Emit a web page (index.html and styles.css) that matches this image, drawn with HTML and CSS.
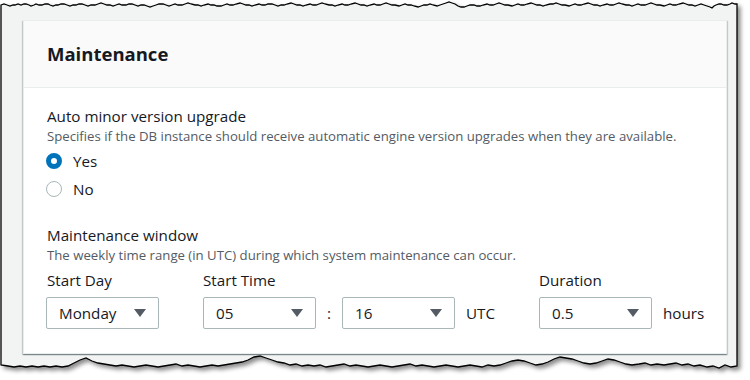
FILE: index.html
```html
<!DOCTYPE html>
<html lang="en">
<head>
  <meta charset="UTF-8">
  <title>Maintenance</title>
  <link rel="stylesheet" href="styles.css">
</head>
<body>
  <div class="sheet">
    <svg class="torn" width="750" height="380" viewBox="0 0 750 380">
      <path d="M1 5 L4 4 L7 5 L10 6 L13 5 L15 5 L18 4 L21 5 L24 4 L26 4 L29 5 L31 6 L34 5 L36 4 L39 5 L42 5 L45 4 L48 4 L50 5 L53 6 L56 5 L58 5 L61 4 L64 4 L67 5 L70 6 L73 5 L76 5 L79 4 L82 4 L85 5 L88 6 L91 5 L95 5 L98 4 L101 3 L104 4 L107 5 L110 5 L113 6 L116 5 L119 4 L122 5 L126 5 L129 4 L132 4 L135 5 L138 6 L141 5 L144 5 L147 6 L150 7 L153 6 L156 5 L159 4 L163 4 L166 5 L169 6 L172 5 L175 4 L178 5 L182 5 L185 4 L188 3 L191 4 L195 5 L198 5 L201 6 L204 5 L208 4 L211 5 L214 5 L217 6 L221 6 L224 5 L227 4 L230 5 L233 5 L236 4 L240 3 L243 4 L246 5 L249 5 L252 6 L255 5 L259 4 L262 5 L265 5 L268 4 L272 4 L275 5 L278 6 L281 5 L284 5 L287 4 L291 3 L294 4 L297 5 L300 5 L303 6 L306 5 L310 4 L313 5 L316 5 L319 4 L322 3 L325 4 L329 5 L332 5 L335 6 L338 5 L342 4 L345 5 L348 5 L351 4 L355 3 L358 4 L361 5 L364 5 L367 6 L370 5 L374 4 L377 5 L380 5 L383 4 L386 3 L389 4 L392 5 L395 5 L399 6 L402 5 L405 4 L408 5 L411 5 L414 6 L418 7 L421 6 L424 5 L427 5 L430 4 L433 5 L437 6 L440 5 L443 4 L446 3 L449 2 L452 3 L455 4 L458 6 L461 7 L464 7 L467 6 L470 5 L474 5 L477 6 L480 6 L483 5 L487 4 L490 5 L493 5 L496 4 L499 3 L502 4 L505 5 L508 5 L512 6 L515 5 L518 4 L521 5 L524 5 L527 4 L531 3 L534 4 L537 5 L540 5 L543 6 L546 5 L550 4 L553 4 L556 3 L559 4 L562 5 L565 5 L569 6 L572 5 L575 4 L578 5 L581 5 L584 4 L588 3 L591 4 L594 5 L597 5 L600 6 L603 5 L607 4 L610 5 L613 5 L616 4 L619 3 L622 4 L626 5 L629 5 L632 6 L635 5 L638 4 L641 5 L645 5 L648 4 L651 3 L654 4 L657 5 L660 5 L664 6 L667 5 L670 4 L673 5 L676 5 L679 4 L683 3 L686 4 L689 5 L692 5 L695 6 L698 5 L701 4 L704 5 L707 6 L710 7 L712 8 L714 6 L716 5 L719 4 L721 4 L724 5 L727 5 L730 4 L732 3 L735 4 L737 4 L737 366 L731 367 L725 365 L719 368 L713 366 L707 367 L700 365 L694 366 L688 364 L682 365 L676 363 L670 364 L664 365 L657 364 L651 365 L645 363 L639 364 L632 365 L626 364 L620 362 L614 360 L608 359 L602 361 L596 363 L590 364 L584 363 L578 361 L572 359 L566 358 L560 357 L554 359 L548 362 L542 364 L536 365 L530 363 L524 361 L518 360 L512 361 L506 363 L500 365 L494 366 L488 365 L482 367 L476 366 L470 365 L464 366 L458 367 L452 366 L446 365 L440 366 L434 367 L428 366 L422 365 L416 366 L410 364 L404 365 L398 366 L392 367 L386 366 L380 365 L374 366 L368 367 L362 366 L356 365 L350 366 L344 364 L338 365 L332 366 L326 367 L320 365 L314 366 L308 365 L302 366 L296 364 L290 365 L284 363 L278 362 L272 360 L266 358 L260 356 L254 357 L248 360 L242 362 L236 363 L230 364 L224 365 L218 366 L212 365 L206 366 L200 367 L194 366 L188 365 L182 366 L176 364 L170 365 L164 366 L158 367 L152 366 L146 365 L140 366 L134 367 L128 366 L122 365 L116 366 L110 365 L104 364 L98 363 L92 361 L86 358 L80 360 L74 363 L68 366 L62 367 L56 366 L50 367 L44 366 L38 367 L32 366 L26 367 L20 366 L14 367 L8 366 L1 365 Z"/>
    </svg>

    <div class="card">
      <div class="card-header">
        <h2>Maintenance</h2>
      </div>

      <div class="card-body">
        <div class="field">
          <div class="label">Auto minor version upgrade</div>
          <div class="desc">Specifies if the DB instance should receive automatic engine version upgrades when they are available.</div>
          <div class="radio"><span class="dot checked"></span>Yes</div>
          <div class="radio"><span class="dot"></span>No</div>
        </div>

        <div class="field window">
          <div class="label">Maintenance window</div>
          <div class="desc">The weekly time range (in UTC) during which system maintenance can occur.</div>

          <div class="window-row">
            <div class="group first">
              <div class="label">Start Day</div>
              <div class="select-row">
                <div class="select">Monday
                  <svg class="caret" width="12" height="8" viewBox="0 0 12 8"><path d="M0 0h12L6 8z"/></svg>
                </div>
              </div>
            </div>

            <div class="group">
              <div class="label">Start Time</div>
              <div class="select-row">
                <div class="select">05
                  <svg class="caret" width="12" height="8" viewBox="0 0 12 8"><path d="M0 0h12L6 8z"/></svg>
                </div>
                <span class="unit">:</span>
                <div class="select">16
                  <svg class="caret" width="12" height="8" viewBox="0 0 12 8"><path d="M0 0h12L6 8z"/></svg>
                </div>
                <span class="unit">UTC</span>
              </div>
            </div>

            <div class="group">
              <div class="label">Duration</div>
              <div class="select-row">
                <div class="select">0.5
                  <svg class="caret" width="12" height="8" viewBox="0 0 12 8"><path d="M0 0h12L6 8z"/></svg>
                </div>
                <span class="unit">hours</span>
              </div>
            </div>
          </div>
        </div>
      </div>
    </div>
  </div>
</body>
</html>
```

FILE: styles.css
```css
body {
  margin: 0;
  background: #ffffff;
  font-family: "Open Sans", Arial, sans-serif;
  color: #16191f;
}

.sheet {
  position: relative;
  width: 750px;
  height: 380px;
  padding: 20px 0 0 23px;
  box-sizing: border-box;
}

.torn {
  position: absolute;
  top: 0;
  left: 0;
  filter: drop-shadow(3px 3px 2px rgba(0, 0, 0, 0.45));
}

.torn path {
  fill: #f2f3f3;
  stroke: #000000;
  stroke-width: 1.3;
}

.card {
  position: relative;
  width: 704px;
  background: #ffffff;
  border: 1px solid #eaeded;
  box-sizing: border-box;
  box-shadow: 0 1px 1px 0 rgba(0, 28, 36, 0.3), 1px 1px 1px 0 rgba(0, 28, 36, 0.15), -1px 1px 1px 0 rgba(0, 28, 36, 0.15);
}

.card-header {
  background: #fafafa;
  border-bottom: 1px solid #eaeded;
  padding: 21px 23px;
}

.card-header h2 {
  margin: 0;
  font-size: 18.5px;
  line-height: 24px;
  font-weight: 700;
}

.card-body {
  padding: 17px 23px 24px;
}

.label {
  font-size: 15.2px;
  line-height: 22px;
}

.desc {
  font-size: 13.2px;
  line-height: 18px;
  color: #545b64;
  margin-bottom: 2px;
}

.radio {
  display: flex;
  align-items: center;
  height: 28px;
  font-size: 15.2px;
}

.dot {
  width: 16px;
  height: 16px;
  border-radius: 50%;
  border: 1.5px solid #aab7b8;
  box-sizing: border-box;
  margin: 0 11px 0 -1px;
  background: #ffffff;
}

.dot.checked {
  border: 5px solid #0073bb;
}

.window {
  margin-top: 21px;
}

.window-row {
  display: flex;
  gap: 44px;
  margin-top: 5px;
}

.group .label {
  margin-bottom: 6px;
}

.select-row {
  display: flex;
  align-items: center;
  gap: 11px;
}

.group.first .select-row {
  margin-left: -1px;
}

.select {
  width: 113px;
  height: 32px;
  box-sizing: border-box;
  border: 1px solid #aab7b8;
  border-radius: 2px;
  padding: 0 12px 0 12px;
  display: flex;
  align-items: center;
  justify-content: space-between;
  font-size: 15.2px;
}

.caret {
  fill: #545b64;
}

.unit {
  font-size: 15.2px;
}
```
